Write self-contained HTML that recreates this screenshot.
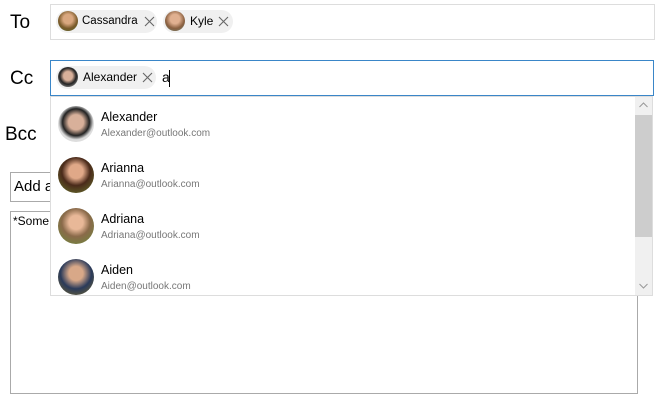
<!DOCTYPE html><html><head><style>
body{margin:0;width:664px;height:400px;background:#fff;font-family:"Liberation Sans",sans-serif;position:relative;overflow:hidden}
.a{position:absolute}
.lbl{font-size:19px;color:#000}
.box{position:absolute;border:1px solid #d0d0d0;box-sizing:border-box;background:#fff}
.chip{position:absolute;height:23px;border-radius:12px;background:#f0f0f0;font-size:12px;line-height:23px;color:#000}
.chip .av{position:absolute;left:2px;top:1px;width:20px;height:20px;border-radius:50%}
.chip .t{position:absolute;left:27px}
.chip svg{position:absolute;top:6px}
.item{position:absolute;left:51px;width:584px;height:51px}
.item .av{position:absolute;left:7px;top:8px;width:36px;height:36px;border-radius:50%}
.item .n{position:absolute;left:50px;top:12px;font-size:12.5px;color:#000}
.item .e{position:absolute;left:50px;top:30px;font-size:10px;color:#777}
</style></head><body>
<div class="a lbl" style="left:10px;top:12px">To</div>
<div class="a lbl" style="left:10px;top:68px">Cc</div>
<div class="a lbl" style="left:5px;top:124px">Bcc</div>
<div class="box" style="left:50px;top:4px;width:605px;height:36px;border-color:#ddd"></div>
<div class="chip" style="left:56px;top:10px;width:101px"><div class="av" style="background:radial-gradient(circle at 50% 40%,#d9a77f 30%,#7a5a2a 60%,#556b2f)"></div><span class="t" style="font-size:11.5px;left:26px">Cassandra</span><svg width="11" height="11" style="left:88px"><path d="M1 1L10 10M10 1L1 10" stroke="#666" stroke-width="1.1"/></svg></div>
<div class="chip" style="left:163px;top:10px;width:70px"><div class="av" style="background:radial-gradient(circle at 50% 40%,#e0b090 30%,#8a6040 60%,#6a8070)"></div><span class="t">Kyle</span><svg width="11" height="11" style="left:55px"><path d="M1 1L10 10M10 1L1 10" stroke="#666" stroke-width="1.1"/></svg></div>
<div class="box" style="left:50px;top:60px;width:604px;height:36px;border-color:#3a86c8"></div>
<div class="chip" style="left:56px;top:66px;width:100px"><div class="av" style="background:radial-gradient(circle at 50% 45%,#d8b09a 30%,#222 55%,#ccc)"></div><span class="t">Alexander</span><svg width="11" height="11" style="left:86px"><path d="M1 1L10 10M10 1L1 10" stroke="#666" stroke-width="1.1"/></svg></div>
<div class="a" style="left:162px;top:69px;font-size:14px">a</div>
<div class="a" style="left:169px;top:70px;width:1px;height:17px;background:#000"></div>
<div class="box" style="left:10px;top:172px;width:60px;height:30px;border-color:#aaa"></div>
<div class="a" style="left:14px;top:178px;font-size:15px">Add a</div>
<div class="box" style="left:10px;top:211px;width:628px;height:183px;border-color:#aaa"></div>
<div class="a" style="left:13px;top:214px;font-size:12px">*Some</div>
<div class="box" style="left:50px;top:96px;width:603px;height:200px;border-color:#ddd"></div>
<div class="a" style="left:635px;top:97px;width:17px;height:198px;background:#f0f0f0"></div>
<div class="a" style="left:635px;top:115px;width:17px;height:122px;background:#cdcdcd"></div>
<svg class="a" style="left:639px;top:102px" width="9" height="6"><path d="M0.5 5L4.5 1L8.5 5" fill="none" stroke="#999"/></svg>
<svg class="a" style="left:639px;top:283px" width="9" height="6"><path d="M0.5 1L4.5 5L8.5 1" fill="none" stroke="#999"/></svg>
<div class="item" style="top:98px"><div class="av" style="background:radial-gradient(circle at 50% 45%,#d8b09a 28%,#222 50%,#ddd 65%)"></div><div class="n">Alexander</div><div class="e">Alexander@outlook.com</div></div>
<div class="item" style="top:149px"><div class="av" style="background:radial-gradient(circle at 50% 40%,#e0a888 25%,#4a2a1a 50%,#6a7a30)"></div><div class="n">Arianna</div><div class="e">Arianna@outlook.com</div></div>
<div class="item" style="top:200px"><div class="av" style="background:radial-gradient(circle at 50% 40%,#e8b898 25%,#8a6a4a 50%,#6a8a3a)"></div><div class="n">Adriana</div><div class="e">Adriana@outlook.com</div></div>
<div class="item" style="top:251px"><div class="av" style="background:radial-gradient(circle at 50% 40%,#d8a888 25%,#2a3a5a 55%,#7a6a2a)"></div><div class="n">Aiden</div><div class="e">Aiden@outlook.com</div></div>
</body></html>
